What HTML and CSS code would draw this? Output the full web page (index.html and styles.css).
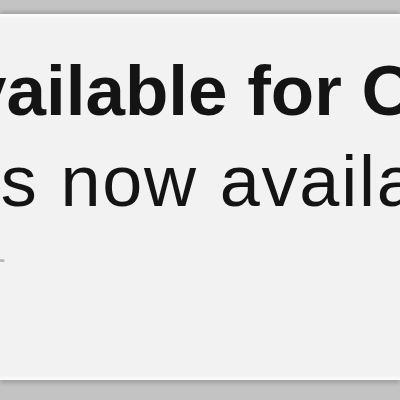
FILE: index.html
```html
<!DOCTYPE html>
<html>
<head>
<meta charset="utf-8">
<link rel="stylesheet" href="styles.css">
</head>
<body>
<div class="card">
  <div class="title">vailable for OS X</div>
  <div class="body">is now available</div>
  <div class="meta">–</div>
</div>
</body>
</html>
```
FILE: styles.css
```css
html, body {
  margin: 0;
  padding: 0;
  width: 400px;
  height: 400px;
  overflow: hidden;
  background: #c3c3c3;
}
.card {
  margin-top: 14px;
  height: 366px;
  background: #f1f2f1;
  box-shadow: 0 -3px 3px #a6a6a6, 0 3px 4px #a0a0a0,
    inset 0 5px 3px -2px #fbfbfb, inset 0 -5px 3px -2px #fbfbfb;
  padding-top: 31px;
  box-sizing: border-box;
  font-family: "Liberation Sans", Arial, sans-serif;
  color: #141414;
  white-space: nowrap;
  overflow: hidden;
}
.title {
  font-weight: bold;
  font-size: 71px;
  line-height: 92px;
  margin-left: -33px;
}
.body {
  font-size: 72px;
  line-height: 89px;
  letter-spacing: 1.8px;
  margin-left: -17px;
}
.meta {
  font-size: 40px;
  line-height: 40px;
  color: #b8b8b8;
  margin-top: 11px;
  margin-left: -18px;
}
```
